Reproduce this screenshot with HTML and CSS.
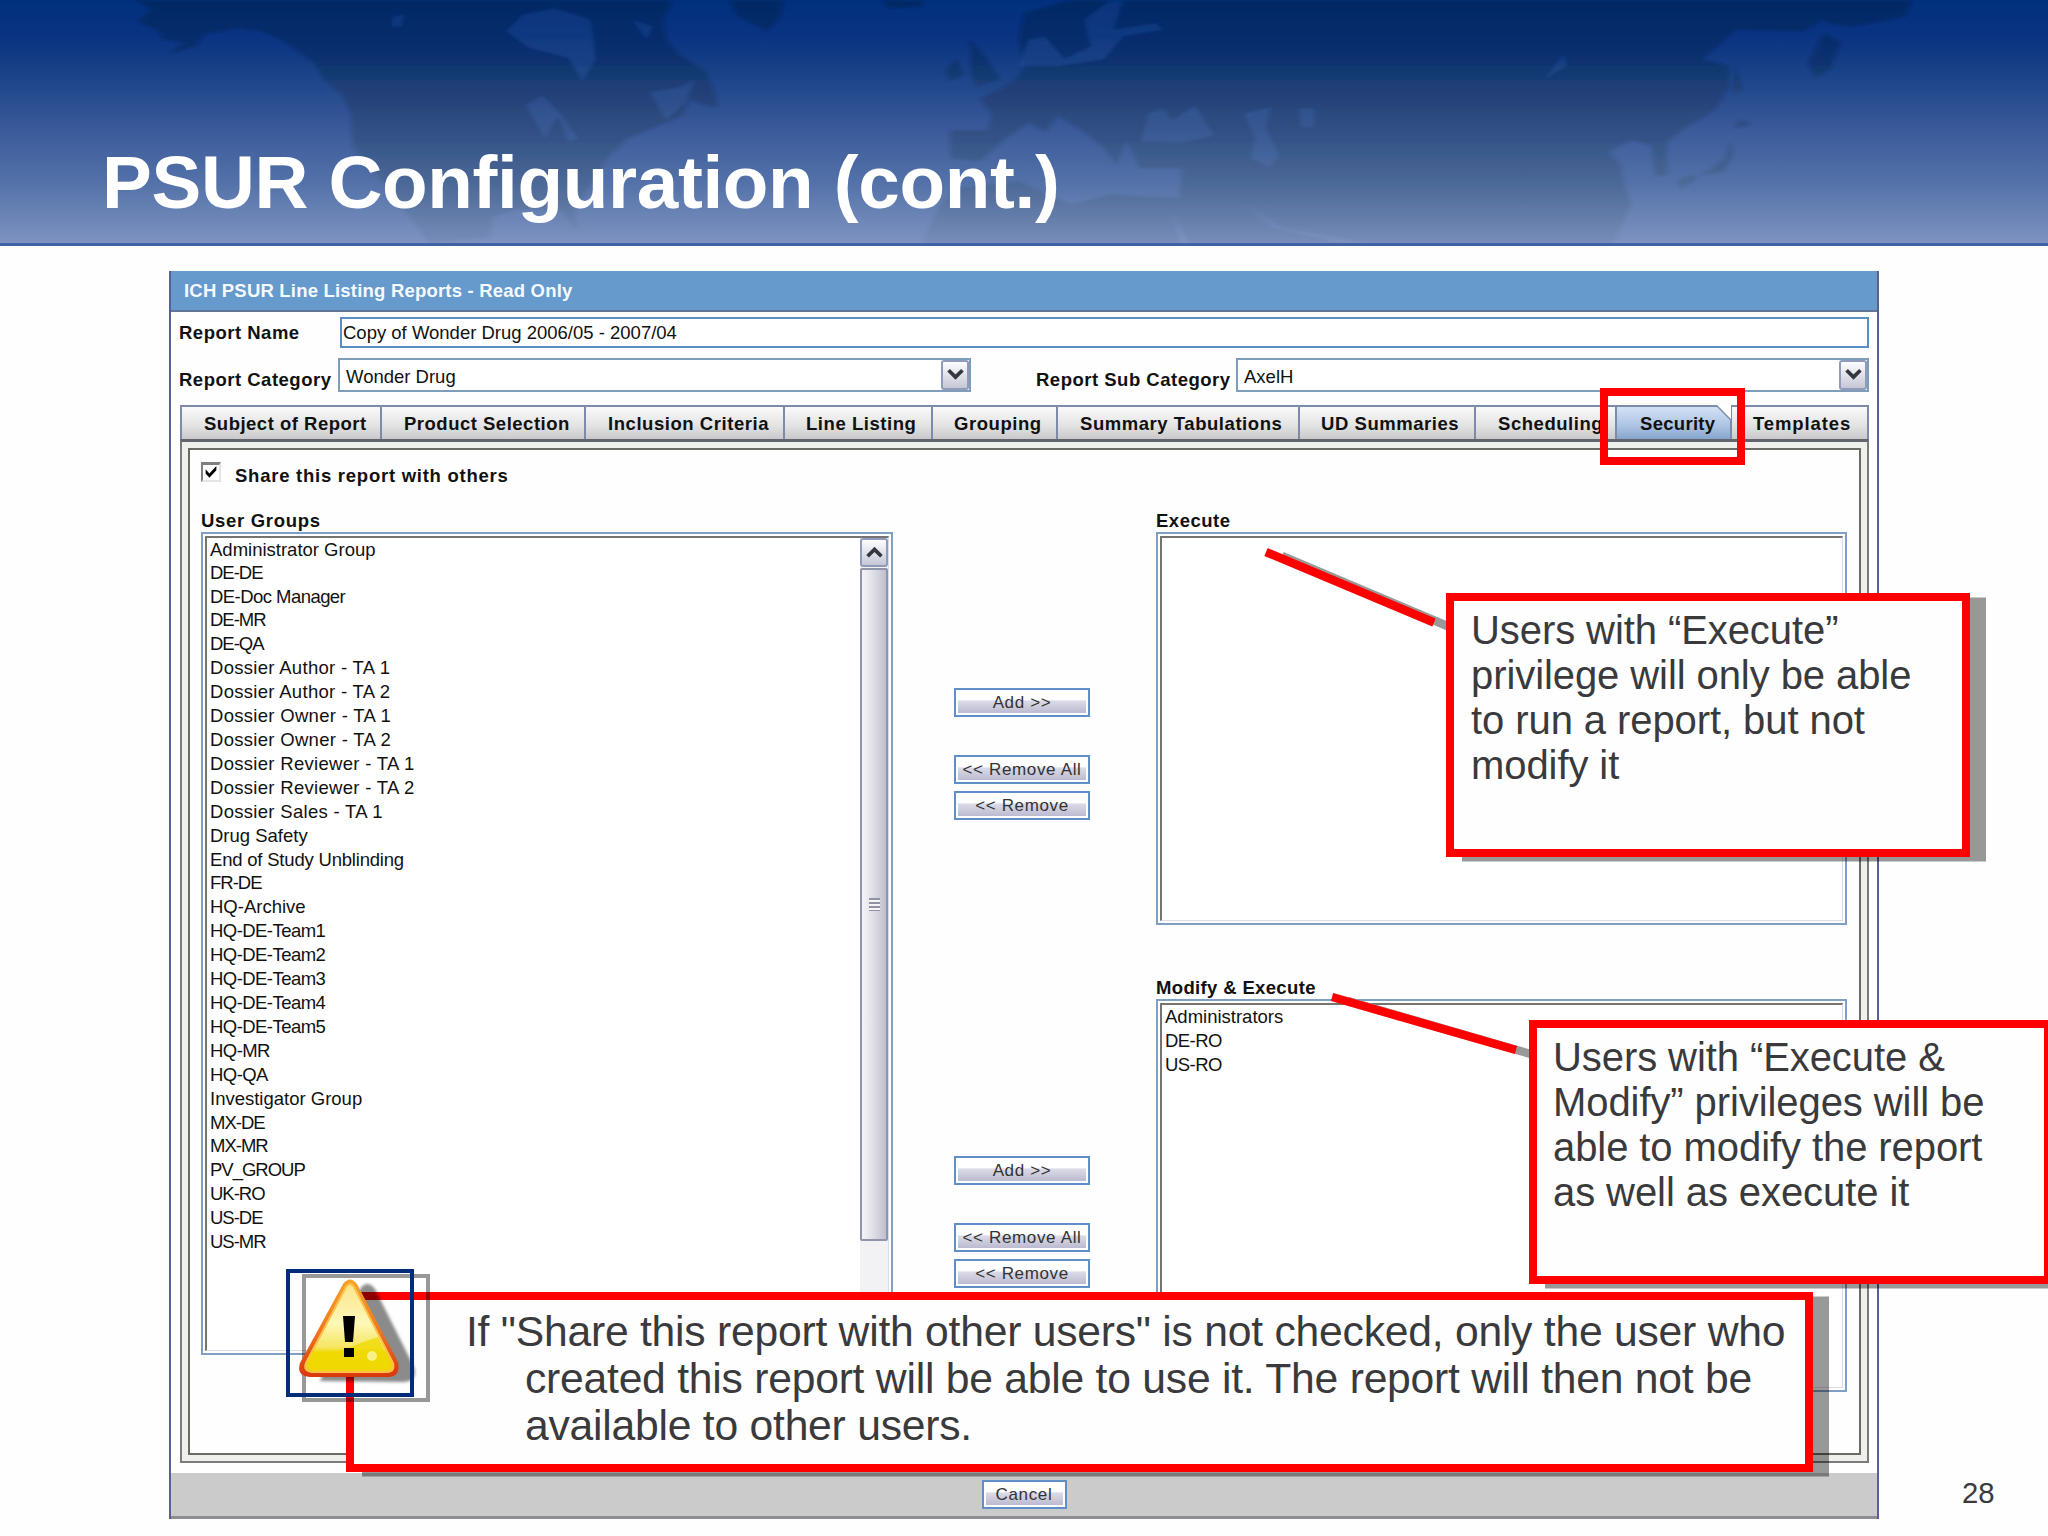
FILE: index.html
```html
<!DOCTYPE html>
<html lang="en">
<head>
<meta charset="utf-8">
<title>PSUR Configuration (cont.)</title>
<link rel="stylesheet" href="styles.css">
</head>
<body>
<div class="slide">
  <header class="banner">
    <svg class="map" viewBox="0 0 3136 737" preserveAspectRatio="none">
      <defs>
        <linearGradient id="landfill" gradientUnits="userSpaceOnUse" x1="0" y1="0" x2="0" y2="737"><stop offset="0" stop-color="#00143c" stop-opacity=".36"/><stop offset=".5" stop-color="#1a3450" stop-opacity=".32"/><stop offset=".8" stop-color="#3a5468" stop-opacity=".24"/><stop offset="1" stop-color="#4a6478" stop-opacity=".12"/></linearGradient>
        <linearGradient id="waterfill" gradientUnits="userSpaceOnUse" x1="0" y1="0" x2="0" y2="737"><stop offset="0" stop-color="#0b3a8c" stop-opacity=".55"/><stop offset=".6" stop-color="#4568a8" stop-opacity=".5"/><stop offset="1" stop-color="#7d96c4" stop-opacity=".4"/></linearGradient>
        <filter id="haze"><feGaussianBlur stdDeviation="3"/></filter>
      </defs>
      <g fill="url(#landfill)" filter="url(#haze)">
        <path d="M208 0L232 30L210 65L240 90L250 120L282 130L255 165L300 140L312 105L340 95L362 85L400 95L430 120L455 155L480 190L497 240L525 290L538 350L540 440L560 500L590 560L620 640L640 690L655 737L750 722L755 660L790 635L860 640L885 705L880 640L915 530L930 480L960 420L1010 380L1045 350L1055 300L1080 320L1100 325L1092 270L1080 215L1040 165L1020 120L1015 60L1030 0Z"/>
        <path d="M1115 0L1130 50L1175 95L1195 50L1200 0ZM1350 0L1362 25L1410 20L1415 0Z"/>
        <path d="M1485 120L1512 180L1532 240L1495 262L1487 220ZM1465 180L1476 225L1455 245L1448 210Z"/>
        <path d="M1568 40L1560 120L1568 210L1550 250L1500 300L1520 350L1512 395L1455 395L1455 480L1500 490L1540 420L1575 370L1600 400L1620 350L1660 400L1690 450L1710 500L1725 430L1745 510L1810 510L1805 600L1700 590L1640 620L1560 550L1470 570L1440 620L1410 737L1808 737L1795 650L1820 737L2060 737L1950 690L1910 625L1960 690L2090 737L2472 737L2498 620L2488 560L2482 500L2463 460L2498 425L2528 440L2535 535L2553 530L2553 430L2578 390L2628 330L2648 260L2648 200L2608 180L2658 90L2763 95L2790 60L2810 75L2838 80L2918 50L2928 0L1640 0Z"/>
        <path d="M2793 100L2818 130L2803 210L2780 235L2768 190ZM2655 195L2668 270L2655 285ZM2665 360L2682 378L2656 390ZM2650 430L2655 470L2640 520L2605 532L2640 480ZM2570 545L2590 530L2600 540L2572 575Z"/>
      </g>
      <g fill="url(#waterfill)" filter="url(#haze)">
        <path d="M850 25L905 60L912 180L892 248L870 175L810 145L775 95L800 45ZM600 50L620 45L615 80L600 80ZM995 280L1040 265L1065 240L1050 310L1020 365ZM805 320L830 290L860 350L885 420L870 430L855 350L835 420ZM968 60L1000 80L990 120Z"/>
        <path d="M1575 120L1600 110L1630 180L1670 140L1660 60L1700 0L1720 0L1705 90L1770 70L1780 90L1720 110L1690 180L1620 200L1560 200ZM1748 430L1758 345L1780 330L1795 365L1830 320L1858 410L1810 432ZM1905 345L1945 325L1938 390L1958 470L1945 508L1915 480L1922 420ZM1990 330L2012 330L2012 385L1992 385ZM2395 165L2398 200L2365 240Z"/>
      </g>
    </svg>
    <h1 class="headline">PSUR Configuration (cont.)</h1>
  </header>

  <main class="window">
    <div class="window-title">ICH PSUR Line Listing Reports - Read Only</div>
    <div class="row name-row">
      <span class="label first">Report Name</span>
      <span class="field text-field">Copy of Wonder Drug 2006/05 - 2007/04</span>
    </div>
    <div class="row category-row">
      <span class="label first">Report Category</span>
      <span class="field select">Wonder Drug<span class="arrow"><svg viewBox="0 0 16 12"><path d="M1.500 2L8 8.500L14.500 2"/></svg></span></span>
      <span class="label second">Report Sub Category</span>
      <span class="field select">AxelH<span class="arrow"><svg viewBox="0 0 16 12"><path d="M1.500 2L8 8.500L14.500 2"/></svg></span></span>
    </div>
    <nav class="tabs">
      <span class="tab t1">Subject of Report</span>
      <span class="tab t2">Product Selection</span>
      <span class="tab t3">Inclusion Criteria</span>
      <span class="tab t4">Line Listing</span>
      <span class="tab t5">Grouping</span>
      <span class="tab t6">Summary Tabulations</span>
      <span class="tab t7">UD Summaries</span>
      <span class="tab t8">Scheduling</span>
      <span class="tab t9 active">Security<svg class="fold" viewBox="0 0 15 15"><path class="cut" d="M0 0H15V15Z"/><path class="edge" d="M0 0L15 15"/></svg></span>
      <span class="tab t10">Templates</span>
    </nav>
    <section class="panel">
      <div class="panel-inner">
        <div class="share">
          <span class="check"><svg viewBox="0 0 14 14"><path d="M2 4V8L5.500 12L12 5V1L5.500 8Z"/></svg></span>
          <span class="label">Share this report with others</span>
        </div>
        <div class="columns">
          <div class="groups">
            <div class="label list-label">User Groups</div>
            <div class="listbox">
              <ul class="items">
                <li>Administrator Group</li><li class="code">DE-DE</li><li class="team">DE-Doc Manager</li><li class="code">DE-MR</li><li class="code">DE-QA</li>
                <li class="dossier">Dossier Author - TA 1</li><li class="dossier">Dossier Author - TA 2</li><li class="dossier">Dossier Owner - TA 1</li><li class="dossier">Dossier Owner - TA 2</li>
                <li class="dossier">Dossier Reviewer - TA 1</li><li class="dossier">Dossier Reviewer - TA 2</li><li class="dossier">Dossier Sales - TA 1</li><li>Drug Safety</li>
                <li class="study">End of Study Unblinding</li><li class="code">FR-DE</li><li>HQ-Archive</li><li class="team">HQ-DE-Team1</li><li class="team">HQ-DE-Team2</li>
                <li class="team">HQ-DE-Team3</li><li class="team">HQ-DE-Team4</li><li class="team">HQ-DE-Team5</li><li class="team">HQ-MR</li><li class="team">HQ-QA</li>
                <li>Investigator Group</li><li class="code">MX-DE</li><li class="code">MX-MR</li><li class="code">PV_GROUP</li><li class="code">UK-RO</li><li class="code">US-DE</li><li class="code">US-MR</li>
              </ul>
              <div class="scrollbar">
                <span class="scroll-up"><svg viewBox="0 0 16 12"><path d="M1.500 9.500L8 3L14.500 9.500"/></svg></span>
                <span class="thumb"><span class="grip"></span></span>
              </div>
            </div>
          </div>
          <div class="actions">
            <span class="button add">Add &gt;&gt;</span>
            <span class="button all">&lt;&lt; Remove All</span>
            <span class="button rem">&lt;&lt; Remove</span>
            <span class="button add lower">Add &gt;&gt;</span>
            <span class="button all">&lt;&lt; Remove All</span>
            <span class="button rem">&lt;&lt; Remove</span>
          </div>
          <div class="rights">
            <div class="label list-label">Execute</div>
            <div class="listbox execute"></div>
            <div class="label list-label modify-label">Modify &amp; Execute</div>
            <div class="listbox modify">
              <ul class="items even"><li>Administrators</li><li class="team">DE-RO</li><li class="team">US-RO</li></ul>
            </div>
          </div>
        </div>
      </div>
    </section>
    <footer class="window-footer"><span class="button cancel">Cancel</span></footer>
  </main>
  <div class="page-number">28</div>

  <div class="highlight"></div>
  <svg class="pointers" viewBox="0 0 2048 1536">
    <g class="pointer-shadow"><path d="M1282 556L1452 628"/><path d="M1348 1001L1534 1055"/></g>
    <g class="pointer"><path d="M1266 552L1434 622.500"/><path d="M1332 997L1516 1050"/></g>
  </svg>
  <div class="callout execute-note">Users with “Execute”<br>privilege will only be able<br>to run a report, but not<br>modify it</div>
  <div class="callout share-note"><p>If "Share this report with other users" is not checked, only the user who<br>created this report will be able to use it. The report will then not be<br>available to other users.</p></div>
  <div class="callout modify-note">Users with “Execute &amp;<br>Modify” privileges will be<br>able to modify the report<br>as well as execute it</div>

  <svg class="warning" viewBox="0 0 150 140">
    <defs>
      <linearGradient id="rim" x1="0" y1="0" x2="0" y2="1"><stop offset="0" stop-color="#f5a32a"/><stop offset=".5" stop-color="#ee7a22"/><stop offset="1" stop-color="#d9380c"/></linearGradient>
      <linearGradient id="face" x1="0" y1="0" x2="0" y2="1"><stop offset="0" stop-color="#fbe58c"/><stop offset=".45" stop-color="#fdf8b8"/><stop offset=".72" stop-color="#f7e560"/><stop offset=".78" stop-color="#eed800"/><stop offset="1" stop-color="#f0d410"/></linearGradient>
      <filter id="soft" x="-20%" y="-20%" width="140%" height="140%"><feGaussianBlur stdDeviation="1.800"/></filter>
    </defs>
    <path class="shade" filter="url(#soft)" d="M74 20Q81 10 89 20L128 98Q132 112 118 113L34 112Z"/>
    <rect class="frame-shadow" x="18" y="7" width="124" height="124"/>
    <path d="M57 15Q64 6 71 15L112 93Q115 107 103 108H24Q10 107 14 94Z" fill="url(#rim)"/>
    <path d="M60 18Q64 12 68 18L107 94Q109 103 101 103H26Q17 102 20 94Z" fill="url(#face)" stroke="#ffc04a" stroke-width="2"/>
    <path d="M26 82Q45 86 62 79T92 68L104 94Q105 100 100 100H28Q22 99 23 92Z" fill="#f0d900" opacity=".75"/>
    <circle cx="86" cy="87" r="5" fill="#fdf6a8" opacity=".8"/>
    <path d="M57 47H69L67 73H59ZM58 79H68V88H58Z" fill="#000"/>
    <rect class="frame" x="2" y="2" width="124" height="124"/>
  </svg>
</div>
</body>
</html>
```
FILE: styles.css
```css
* { box-sizing: border-box; }
body { margin: 0; background: #fff; font-family: "Liberation Sans", Arial, sans-serif; }
.slide { position: relative; width: 2048px; height: 1536px; overflow: hidden; background: #fefefe; }

.banner {
  position: relative; height: 246px; padding: 139px 0 0 102px;
  background: linear-gradient(#00307d 0, #0b3482 40px, #1b4388 75px, #3a5a9a 130px, #5573a9 185px, #7d92c0 241px);
  border-bottom: 3px solid #3f62a6;
}
.map { position: absolute; left: 0; top: 0; width: 2048px; height: 243px; }
.headline { position: relative; margin: 0; color: #fff; font-size: 74.67px; line-height: 86px; letter-spacing: -.34px; font-weight: bold; white-space: nowrap; }

.window {
  width: 1710px; height: 1248px; margin: 25px 0 0 169px;
  border-left: 2px solid #5a5f96; border-right: 2px solid #5a5f96;
  display: flex; flex-direction: column; font-size: 18.5px;
  color: #111;
}
.window-title {
  height: 41px; padding-left: 13px; background: #6699cc; border-bottom: 2px solid #5f7596;
  color: #f4faff; font-weight: bold; line-height: 39px; letter-spacing: .2px; white-space: nowrap;
}
.row { display: flex; white-space: nowrap; padding: 0 8px; }
.name-row { height: 46px; padding-top: 5px; }
.category-row { height: 48px; }
.label { font-weight: bold; letter-spacing: .5px; white-space: nowrap; }
.name-row .first { width: 161px; line-height: 32px; }
.category-row .first { width: 159px; line-height: 44px; }
.second { width: 265px; padding-left: 65px; line-height: 44px; }
.field { background: #fff; border: 2px solid #5b8fc3; display: flex; justify-content: space-between; }
.text-field { width: 1529px; height: 31px; padding-left: 1px; line-height: 28px; }
.select { width: 633px; height: 34px; padding-left: 6px; line-height: 33px; border-color: #7f9db9; }
.arrow, .scroll-up {
  width: 28px; border: 2px solid #8f9bb8; border-radius: 3px;
  background: linear-gradient(#fdfdfe, #c5c7d6);
  display: flex; align-items: center; justify-content: center;
}
.arrow svg, .scroll-up svg { width: 17px; height: 13px; fill: none; stroke: #33373f; stroke-width: 3.5; }

.tabs { display: flex; width: 1689px; height: 34px; margin-left: 9px; font-weight: bold; }
.tab {
  border: 2px solid #7c8ca8; border-left-width: 1px; border-right-width: 1px; border-bottom: 0;
  background: linear-gradient(#fafafa, #e2e2e2 60%, #c9c9cb);
  line-height: 33px; white-space: nowrap; position: relative; letter-spacing: .55px;
}
.t1 { width: 201px; padding-left: 22px; border-left-width: 2px; letter-spacing: .5px; }
.t2 { width: 204px; padding-left: 22px; letter-spacing: .5px; }
.t3 { width: 199px; padding-left: 22px; }
.t4 { width: 148px; padding-left: 21px; }
.t5 { width: 125px; padding-left: 21px; }
.t6 { width: 242px; padding-left: 22px; }
.t7 { width: 176px; padding-left: 21px; }
.t8 { width: 141px; padding-left: 22px; }
.t9 { width: 115px; padding-left: 23px; letter-spacing: .3px; }
.t10 { width: 138px; padding-left: 21px; border-right-width: 2px; letter-spacing: .9px; }
.active { background: linear-gradient(#d3e2f5, #abc3e3 60%, #86a5cd); }
.fold { position: absolute; right: -1px; top: -2px; width: 15px; height: 15px; }
.cut { fill: #fff; }
.edge { stroke: #7c8ca8; stroke-width: 1.5; }

.panel {
  width: 1689px; height: 1024px; margin-left: 9px; padding: 6px;
  border: 2px solid #7b7b7b; border-top: 3px solid #61656e; background: #efefeb;
}
.panel-inner { height: 1007px; padding: 12px 11px 0; border: 2px solid #6b6b66; background: #fefefe; }
.share { display: flex; height: 47px; gap: 14px; }
.share .label { line-height: 28px; letter-spacing: .75px; }
.check {
  width: 20px; height: 20px; border: 2px solid #808080; border-top-width: 3px; border-right-color: #e4e4e0;
  border-bottom-color: #e4e4e0; background: #fff;
}
.check svg { display: block; width: 16px; height: 15px; }
.columns { display: flex; }
.list-label { height: 23px; line-height: 24px; }
.groups { width: 691px; }
.groups .list-label { letter-spacing: .7px; }
.listbox { position: relative; display: flex; justify-content: space-between; background: #fff; border: 2px solid #7f9fc4; }
.listbox::before {
  content: ""; position: absolute; inset: 2px 2px 2px 2px; pointer-events: none;
  border: 2px solid #77736e; border-right: 1px solid #dcdce4; border-bottom: 1px solid #dcdce4;
}
.groups .listbox { width: 692px; height: 823px; padding: 4px 3px 4px 4px; }
.items { list-style: none; margin: 0; padding: 0 0 0 3px; line-height: 23.9px; white-space: nowrap; }
.items li:first-child { height: 22.4px; }
.items.even li:first-child { height: 23.9px; }
.items .code { letter-spacing: -1px; }
.items .team { letter-spacing: -.55px; }
.items .dossier { letter-spacing: .3px; }
.items .study { letter-spacing: -.2px; }
.scrollbar { width: 28px; background: #f2f2f5; display: flex; flex-direction: column; gap: 1px; }
.scroll-up { height: 29px; }
.thumb {
  height: 673px; border: 2px solid #9094ab; border-radius: 2px;
  background: linear-gradient(90deg, #f4f4f7, #e2e2ea 40%, #bfc0cf); display: flex; align-items: center; justify-content: center;
}
.grip { width: 11px; height: 13px; background: repeating-linear-gradient(#8f92a3 0 2px, #f5f5f8 2px 4px); }
.actions { width: 264px; padding: 179px 0 0 62px; }
.button {
  display: block; width: 136px; height: 29px; border: 2px solid #5e8fc6; padding: 2px;
  background: linear-gradient(#fff 38%, #dcdbe8 42%, #bcbad0) content-box, #fff;
  font-size: 17px; line-height: 21px; text-align: center; color: #333; white-space: nowrap; letter-spacing: .65px;
}
.all { margin-top: 38px; }
.rem { margin-top: 7px; }
.lower { margin-top: 336px; }
.rights { width: 691px; }
.execute { height: 393px; }
.modify-label { margin-top: 51px; letter-spacing: .35px; }
.modify { height: 393px; padding: 4px; }
.window-footer {
  margin-top: 10px; height: 46px; padding-top: 7px; background: #cbcbcb; border-bottom: 3px solid #8e8e92;
  display: flex; justify-content: center;
}
.cancel { width: 85px; }
.page-number { position: absolute; left: 1962px; top: 1476px; font-size: 29.33px; line-height: 34px; color: #3a3a3c; }

.highlight { position: absolute; left: 1600px; top: 388px; width: 145px; height: 77px; border: 8px solid #f00; }
.pointers { position: absolute; left: 0; top: 0; width: 2048px; height: 1536px; fill: none; stroke-width: 8.5; }
.pointer { stroke: #f00; }
.pointer-shadow { stroke: #999; }
.callout {
  position: absolute; border: 8px solid #f00; background: #fefefe; color: #3a3a3c;
  box-shadow: 16px 4.5px 0 rgba(0, 0, 0, .4); white-space: nowrap; font-size: 40px; line-height: 44.9px; letter-spacing: -.08px;
}
.execute-note { left: 1446px; top: 593px; width: 524px; height: 264px; padding: 7px 0 0 17px; }
.modify-note { left: 1529px; top: 1020px; width: 523px; height: 264px; padding: 7px 0 0 16px; }
.share-note { left: 346px; top: 1292px; width: 1467px; height: 180px; padding: 8px 0 0 112px; font-size: 42.67px; line-height: 47px; letter-spacing: -.24px; }
.share-note p { margin: 0; padding-left: 59px; text-indent: -59px; }
.warning { position: absolute; left: 286px; top: 1269px; width: 150px; height: 140px; }
.frame { fill: none; stroke: #002d7a; stroke-width: 4; }
.frame-shadow { fill: none; stroke: #000; stroke-opacity: .4; stroke-width: 4; }
.shade { fill: #000; fill-opacity: .45; }
```
